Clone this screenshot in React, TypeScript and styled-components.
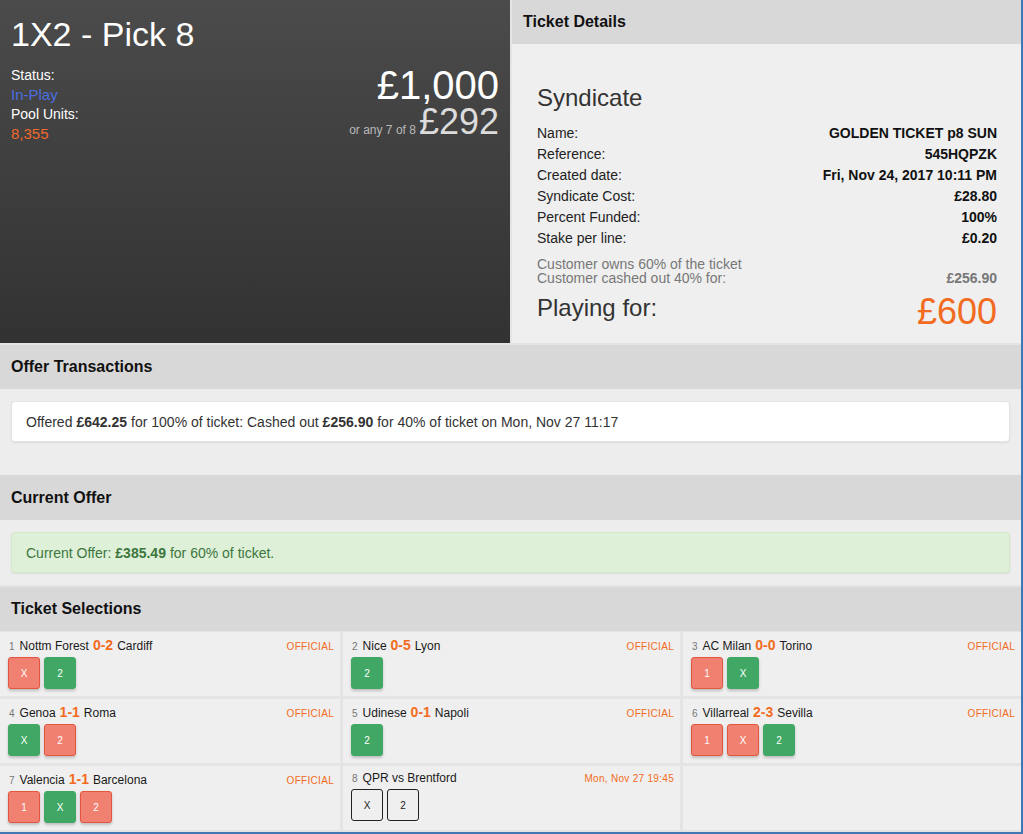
import React from "react";
import styled, { createGlobalStyle } from "styled-components";

const GlobalStyle = createGlobalStyle`
  * { box-sizing: border-box; }
  body {
    margin: 0;
    font-family: "Liberation Sans", Arial, sans-serif;
    background: #ffffff;
  }
`;

const orange = "#f26b21";

const Page = styled.div`
  width: 1023px;
  height: 834px;
  background: #e4e4e4;
  border-right: 2px solid #3f78b3;
  border-bottom: 2px solid #3f78b3;
  display: flex;
  flex-direction: column;
  gap: 2px;
  overflow: hidden;
`;

const Top = styled.div`
  display: grid;
  grid-template-columns: 510px 1fr;
  gap: 2px;
  height: 343px;
`;

const Hero = styled.div`
  background: linear-gradient(to bottom, #4b4b4b, #323232);
  color: #fff;
  padding: 15px 11px 0 11px;
`;

const HeroTitle = styled.h1`
  margin: 0;
  font-size: 34px;
  font-weight: 400;
  line-height: 38px;
`;

const HeroBody = styled.div`
  display: flex;
  justify-content: space-between;
  align-items: flex-start;
  margin-top: 12px;
`;

const InfoList = styled.div`
  display: flex;
  flex-direction: column;
  font-size: 14px;
  line-height: 20px;
`;

const InfoValue = styled.span<{ $color: string }>`
  color: ${(p) => p.$color};
  font-size: 15px;
  line-height: 19px;
`;

const Amounts = styled.div`
  display: flex;
  flex-direction: column;
  align-items: flex-end;
  margin-top: 1px;
`;

const MainAmount = styled.div`
  font-size: 40px;
  line-height: 38px;
`;

const AltRow = styled.div`
  display: flex;
  align-items: baseline;
  gap: 3px;
  margin-top: 2px;
`;

const AltNote = styled.span`
  font-size: 12px;
  color: #b9b9b9;
`;

const AltAmount = styled.span`
  font-size: 36px;
  line-height: 32px;
  color: #dcdcdc;
`;

const Panel = styled.div`
  background: #efefef;
  display: flex;
  flex-direction: column;
`;

const PanelHeader = styled.div<{ $h?: number }>`
  height: ${(p) => p.$h ?? 44}px;
  flex-shrink: 0;
  background: #d9d8d8;
  display: flex;
  align-items: center;
  padding: 0 11px;
  font-size: 16px;
  font-weight: 700;
  color: #111;
`;

const DetailsBody = styled.div`
  padding: 40px 24px 0 25px;
  color: #222;
`;

const Heading = styled.div`
  font-size: 24px;
  line-height: 28px;
  color: #333;
  margin-bottom: 11px;
`;

const DetailRow = styled.div`
  display: flex;
  justify-content: space-between;
  font-size: 14px;
  line-height: 21px;
`;

const DetailValue = styled.span`
  font-weight: 700;
  color: #111;
`;

const Note = styled.div`
  margin-top: 8px;
  font-size: 14px;
  line-height: 14px;
  color: #777;
`;

const NoteRow = styled.div`
  display: flex;
  justify-content: space-between;
`;

const NoteValue = styled.span`
  font-weight: 700;
`;

const PlayingRow = styled.div`
  display: flex;
  justify-content: space-between;
  align-items: flex-start;
  margin-top: 10px;
`;

const PlayingLabel = styled.span`
  font-size: 24px;
  line-height: 26px;
  color: #333;
`;

const PlayingValue = styled.span`
  font-size: 36px;
  line-height: 36px;
  color: ${orange};
  margin-top: -1px;
`;

const Section = styled.div`
  background: #ededed;
  display: flex;
  flex-direction: column;
`;

const SectionBody = styled.div<{ $h: number }>`
  height: ${(p) => p.$h}px;
  padding: 12px 11px 0 11px;
`;

const Card = styled.div<{ $tone?: "success" }>`
  height: 41px;
  display: flex;
  align-items: center;
  padding: 0 14px;
  font-size: 14px;
  border-radius: 4px;
  background: ${(p) => (p.$tone === "success" ? "#dff0d8" : "#ffffff")};
  color: ${(p) => (p.$tone === "success" ? "#3c763d" : "#333")};
  border: 1px solid ${(p) => (p.$tone === "success" ? "#d6e9c6" : "#e3e3e3")};
  box-shadow: 0 1px 2px rgba(0, 0, 0, 0.08);

  b { margin: 0 4px; }
`;

const Grid = styled.div`
  display: grid;
  grid-template-columns: 340px 337px 338px;
  grid-auto-rows: 64px;
  row-gap: 3px;
  column-gap: 3px;
  margin-top: -1px;
`;

const Cell = styled.div`
  background: #efefef;
  padding: 5px 6px 0 8px;
`;

const CellTop = styled.div`
  display: flex;
  justify-content: space-between;
  align-items: baseline;
`;

const Match = styled.div`
  font-size: 12px;
  color: #1a1a1a;
`;

const Num = styled.span`
  font-size: 10px;
  color: #777;
  margin-left: 1px;
  margin-right: 5px;
`;

const Score = styled.span`
  font-size: 14px;
  font-weight: 700;
  color: ${orange};
  margin: 0 4px;
`;

const Status = styled.span`
  font-size: 10px;
  color: ${orange};
  letter-spacing: 0.3px;
`;

const Picks = styled.div`
  display: flex;
  gap: 4px;
  margin-top: 4px;
`;

type Kind = "win" | "lose" | "open";

const Pick = styled.div<{ $kind: Kind }>`
  width: 32px;
  height: 32px;
  border-radius: 3px;
  display: flex;
  align-items: center;
  justify-content: center;
  font-size: 10px;
  color: ${(p) => (p.$kind === "open" ? "#222" : "#fff")};
  background: ${(p) =>
    p.$kind === "win" ? "#40a864" : p.$kind === "lose" ? "#f08070" : "transparent"};
  border: 1px solid
    ${(p) => (p.$kind === "win" ? "#40a864" : p.$kind === "lose" ? "#e4553f" : "#222")};
  box-shadow: ${(p) => (p.$kind === "open" ? "none" : "0 2px 3px rgba(0,0,0,0.2)")};
`;

type Selection = {
  n: number;
  home: string;
  away: string;
  score?: string;
  status: string;
  picks: [string, Kind][];
};

const selections: Selection[] = [
  { n: 1, home: "Nottm Forest", away: "Cardiff", score: "0-2", status: "OFFICIAL", picks: [["X", "lose"], ["2", "win"]] },
  { n: 2, home: "Nice", away: "Lyon", score: "0-5", status: "OFFICIAL", picks: [["2", "win"]] },
  { n: 3, home: "AC Milan", away: "Torino", score: "0-0", status: "OFFICIAL", picks: [["1", "lose"], ["X", "win"]] },
  { n: 4, home: "Genoa", away: "Roma", score: "1-1", status: "OFFICIAL", picks: [["X", "win"], ["2", "lose"]] },
  { n: 5, home: "Udinese", away: "Napoli", score: "0-1", status: "OFFICIAL", picks: [["2", "win"]] },
  { n: 6, home: "Villarreal", away: "Sevilla", score: "2-3", status: "OFFICIAL", picks: [["1", "lose"], ["X", "lose"], ["2", "win"]] },
  { n: 7, home: "Valencia", away: "Barcelona", score: "1-1", status: "OFFICIAL", picks: [["1", "lose"], ["X", "win"], ["2", "lose"]] },
  { n: 8, home: "QPR", away: "Brentford", status: "Mon, Nov 27 19:45", picks: [["X", "open"], ["2", "open"]] },
];

const details: [string, string][] = [
  ["Name:", "GOLDEN TICKET p8 SUN"],
  ["Reference:", "545HQPZK"],
  ["Created date:", "Fri, Nov 24, 2017 10:11 PM"],
  ["Syndicate Cost:", "£28.80"],
  ["Percent Funded:", "100%"],
  ["Stake per line:", "£0.20"],
];

export default function App() {
  return (
    <>
      <GlobalStyle />
      <Page>
        <Top>
          <Hero>
            <HeroTitle>1X2 - Pick 8</HeroTitle>
            <HeroBody>
              <InfoList>
                <span>Status:</span>
                <InfoValue $color="#4a6fe0">In-Play</InfoValue>
                <span>Pool Units:</span>
                <InfoValue $color="#f0682a">8,355</InfoValue>
              </InfoList>
              <Amounts>
                <MainAmount>£1,000</MainAmount>
                <AltRow>
                  <AltNote>or any 7 of 8</AltNote>
                  <AltAmount>£292</AltAmount>
                </AltRow>
              </Amounts>
            </HeroBody>
          </Hero>
          <Panel>
            <PanelHeader>Ticket Details</PanelHeader>
            <DetailsBody>
              <Heading>Syndicate</Heading>
              {details.map(([k, v]) => (
                <DetailRow key={k}>
                  <span>{k}</span>
                  <DetailValue>{v}</DetailValue>
                </DetailRow>
              ))}
              <Note>
                <div>Customer owns 60% of the ticket</div>
                <NoteRow>
                  <span>Customer cashed out 40% for:</span>
                  <NoteValue>£256.90</NoteValue>
                </NoteRow>
              </Note>
              <PlayingRow>
                <PlayingLabel>Playing for:</PlayingLabel>
                <PlayingValue>£600</PlayingValue>
              </PlayingRow>
            </DetailsBody>
          </Panel>
        </Top>

        <Section>
          <PanelHeader>Offer Transactions</PanelHeader>
          <SectionBody $h={86}>
            <Card>
              Offered<b>£642.25</b>for 100% of ticket: Cashed out<b>£256.90</b>for 40% of ticket on Mon, Nov 27 11:17
            </Card>
          </SectionBody>
          <PanelHeader $h={45}>Current Offer</PanelHeader>
          <SectionBody $h={65}>
            <Card $tone="success">
              Current Offer:<b>£385.49</b>for 60% of ticket.
            </Card>
          </SectionBody>
        </Section>

        <Section>
          <PanelHeader>Ticket Selections</PanelHeader>
        </Section>
        <Grid>
          {selections.map((s) => (
            <Cell key={s.n}>
              <CellTop>
                <Match>
                  <Num>{s.n}</Num>
                  {s.home}
                  {s.score ? <Score>{s.score}</Score> : " vs "}
                  {s.away}
                </Match>
                <Status>{s.status}</Status>
              </CellTop>
              <Picks>
                {s.picks.map(([label, kind]) => (
                  <Pick key={label} $kind={kind}>
                    {label}
                  </Pick>
                ))}
              </Picks>
            </Cell>
          ))}
          <Cell />
        </Grid>
      </Page>
    </>
  );
}
